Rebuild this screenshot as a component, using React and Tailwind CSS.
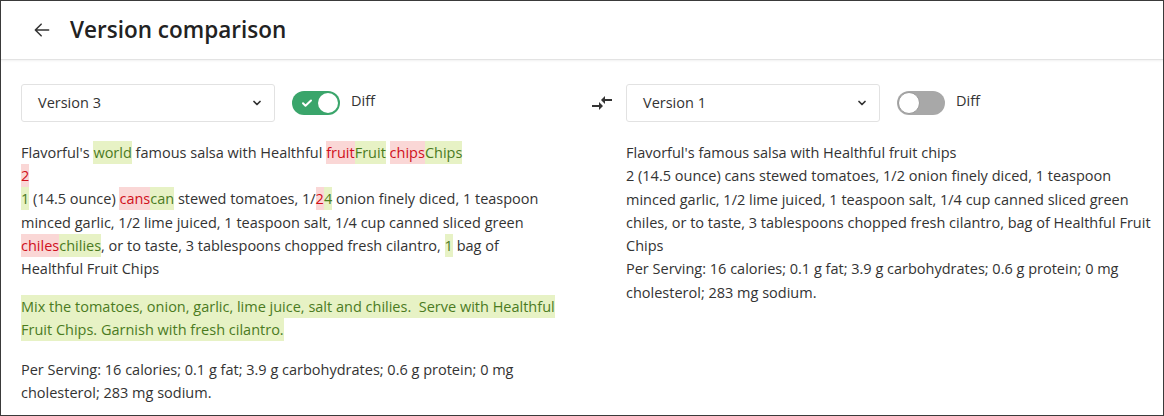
import React from "react";

const Del = ({ children }) => (
  <span className="bg-[#fad7d6] text-[#d0101b] py-[2px]">{children}</span>
);

const Ins = ({ children }) => (
  <span className="bg-[#e7f2c5] text-[#4b7b1f] py-[2px]">{children}</span>
);

const Chevron = () => (
  <svg width="12" height="12" viewBox="0 0 24 24" fill="none" stroke="#333" strokeWidth="3.5" strokeLinecap="round" strokeLinejoin="round">
    <path d="M6 9l6 6 6-6" />
  </svg>
);

const VersionSelect = ({ label }) => (
  <div className="w-[254px] h-[38px] border border-[#e2e2e2] rounded-[3px] flex items-center justify-between pl-[16px] pr-[11px] text-[14.5px] text-[#333]">
    <span>{label}</span>
    <Chevron />
  </div>
);

const Toggle = ({ on }) =>
  on ? (
    <div className="w-[48px] h-[24px] rounded-full bg-[#3aa56b] flex items-center justify-between pl-[9px] pr-[2px]">
      <svg width="12" height="12" viewBox="0 0 24 24" fill="none" stroke="#fff" strokeWidth="4" strokeLinecap="round" strokeLinejoin="round">
        <path d="M4 12.5l5 5L20 7" />
      </svg>
      <div className="w-[20px] h-[20px] rounded-full bg-white" />
    </div>
  ) : (
    <div className="w-[48px] h-[24px] rounded-full bg-[#a8a8a8] flex items-center pl-[1px]">
      <div className="w-[22px] h-[22px] rounded-full bg-white border border-[#999]" />
    </div>
  );

const Controls = ({ label, on }) => (
  <div className="flex items-start h-[38px]">
    <VersionSelect label={label} />
    <div className="ml-[17px] mt-[7px]">
      <Toggle on={on} />
    </div>
    <span className="ml-[11px] mt-[8px] text-[14.5px] leading-[18px] text-[#333]">Diff</span>
  </div>
);

export default function App() {
  return (
    <div
      className="w-[1164px] h-[416px] border border-[#3a3a3a] bg-white overflow-hidden text-[#333]"
      style={{ fontFamily: '"Segoe UI", "Open Sans", sans-serif' }}
    >
      {/* Header */}
      <div className="h-[59px] border-b border-[#e3e3e3] shadow-[0_1px_2px_rgba(0,0,0,0.06)] flex items-center pl-[31px]">
        <svg width="20" height="20" viewBox="0 0 24 24" fill="none" stroke="#333" strokeWidth="1.8" strokeLinecap="round" strokeLinejoin="round">
          <path d="M20 12H4M11 5l-7 7 7 7" />
        </svg>
        <h1 className="ml-[18px] text-[22.5px] font-semibold text-[#222]">Version comparison</h1>
      </div>

      {/* Body */}
      <div className="flex pl-[20px] pt-[24px]">
        {/* Left */}
        <div className="w-[556px]">
          <Controls label="Version 3" on />
          <div className="mt-[19px] text-[14.5px] leading-[23.2px] whitespace-nowrap">
            <p>
              Flavorful's <Ins>world</Ins> famous salsa with Healthful <Del>fruit</Del>
              <Ins>Fruit</Ins> <Del>chips</Del>
              <Ins>Chips</Ins>
              <br />
              <Del>2</Del>
              <br />
              <Ins>1</Ins> (14.5 ounce) <Del>cans</Del>
              <Ins>can</Ins> stewed tomatoes, 1/<Del>2</Del>
              <Ins>4</Ins> onion finely diced, 1 teaspoon
              <br />
              minced garlic, 1/2 lime juiced, 1 teaspoon salt, 1/4 cup canned sliced green
              <br />
              <Del>chiles</Del>
              <Ins>chilies</Ins>, or to taste, 3 tablespoons chopped fresh cilantro, <Ins>1</Ins> bag of
              <br />
              Healthful Fruit Chips
            </p>
            <p className="mt-[15px]">
              <Ins>
                Mix the tomatoes, onion, garlic, lime juice, salt and chilies.&nbsp; Serve with Healthful
                <br />
                Fruit Chips. Garnish with fresh cilantro.
              </Ins>
            </p>
            <p className="mt-[16px]">
              Per Serving: 16 calories; 0.1 g fat; 3.9 g carbohydrates; 0.6 g protein; 0 mg
              <br />
              cholesterol; 283 mg sodium.
            </p>
          </div>
        </div>

        {/* Swap */}
        <div className="w-[49px] h-[38px] flex items-center justify-center">
          <svg width="24" height="24" viewBox="0 0 24 24" fill="#333">
            <path d="M9.01 14H2v2h7.01v3L13 15l-3.99-4v3zm5.98-1v-3H22V8h-7.01V5L11 9l3.99 4z" />
          </svg>
        </div>

        {/* Right */}
        <div className="flex-1">
          <Controls label="Version 1" on={false} />
          <div className="mt-[19px] text-[14.5px] leading-[23.3px] whitespace-nowrap">
            <p>
              Flavorful's famous salsa with Healthful fruit chips
              <br />
              2 (14.5 ounce) cans stewed tomatoes, 1/2 onion finely diced, 1 teaspoon
              <br />
              minced garlic, 1/2 lime juiced, 1 teaspoon salt, 1/4 cup canned sliced green
              <br />
              chiles, or to taste, 3 tablespoons chopped fresh cilantro, bag of Healthful Fruit
              <br />
              Chips
            </p>
            <p>
              Per Serving: 16 calories; 0.1 g fat; 3.9 g carbohydrates; 0.6 g protein; 0 mg
              <br />
              cholesterol; 283 mg sodium.
            </p>
          </div>
        </div>
      </div>
    </div>
  );
}
